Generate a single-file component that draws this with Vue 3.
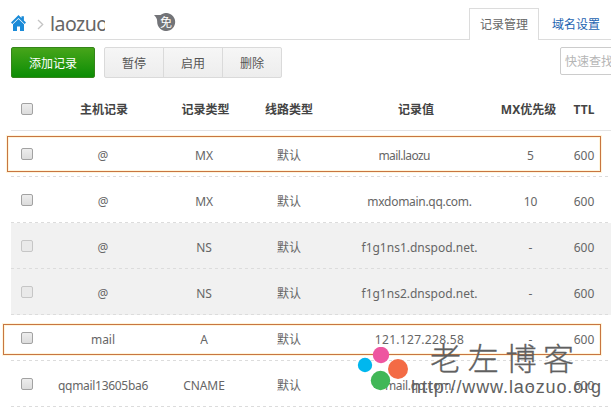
<script setup>
const rows = [
  { host: '@', type: 'MX', value: 'mail.laozuo', mx: '5', clip: true },
  { host: '@', type: 'MX', value: 'mxdomain.qq.com.', mx: '10', fit: 'tight' },
  { host: '@', type: 'NS', value: 'f1g1ns1.dnspod.net.', mx: '-', locked: true },
  { host: '@', type: 'NS', value: 'f1g1ns2.dnspod.net.', mx: '-', locked: true },
  { host: 'mail', type: 'A', value: '121.127.228.58', mx: '-', fit: 'loose' },
  { host: 'qqmail13605ba6', type: 'CNAME', value: 'mail.qq.com.', mx: '-', fit: 'tight' },
]
</script>

<template>
  <div class="page">
    <header class="top">
      <svg class="home" width="16" height="16" viewBox="0 0 16 16">
        <path d="M7.500 0 0 7.500 1.300 9 7.500 2.900 13.700 9 15 7.500 12.900 5.400V1.200h-2.400v1.800z" fill="#1b8bd8" />
        <path d="M7.500 3.900 2 9.200V16H6v-4.500h3V16h4V9.200z" fill="#1b8bd8" />
      </svg>
      <svg class="chevron" width="7" height="11" viewBox="0 0 7 11">
        <path d="M1 1l4.700 4.500L1 10" fill="none" stroke="#c4c4c4" stroke-width="1.300" />
      </svg>
      <h1 class="domain"><span>laozuo</span></h1>
      <div class="badge">
        <svg width="22" height="19" viewBox="0 0 22 19">
          <path d="M0 2h6.500a9 9 0 1 1-3.300 6.500C3.200 5.500 2 4 0 2z" fill="#737478" />
        </svg>
        <span>免</span>
      </div>
      <nav class="tabs">
        <a class="tab active">记录管理</a>
        <a class="tab">域名设置</a>
      </nav>
    </header>

    <div class="tools">
      <button class="add">添加记录</button>
      <div class="group">
        <button>暂停</button>
        <button>启用</button>
        <button>删除</button>
      </div>
      <div class="search">快速查找</div>
    </div>

    <div class="table">
      <div class="row head">
        <i class="check"></i>
        <span class="host">主机记录</span>
        <span class="type">记录类型</span>
        <span>线路类型</span>
        <span class="value">记录值</span>
        <span class="mx">MX优先级</span>
        <span>TTL</span>
      </div>
      <div v-for="(r, i) in rows" :key="i" class="row" :class="[r.fit, { locked: r.locked }]">
        <i class="check"></i>
        <span class="host">{{ r.host }}</span>
        <span class="type">{{ r.type }}</span>
        <span>默认</span>
        <span class="value" :class="{ clip: r.clip }"><b>{{ r.value }}</b></span>
        <span>{{ r.mx }}</span>
        <span>600</span>
      </div>
    </div>

    <div class="mark first"></div>
    <div class="mark second"></div>

    <div class="stamp">
      <svg class="dots" width="52" height="46" viewBox="0 0 52 46">
        <circle cx="8" cy="18" r="7.200" fill="#00b7ee" />
        <circle cx="24" cy="8" r="8.200" fill="#ee56a0" />
        <circle cx="41" cy="22" r="10" fill="#f36b45" />
        <circle cx="23.500" cy="33.500" r="9.700" fill="#41b757" />
      </svg>
      <div class="stamp-name">老左博客</div>
      <div class="stamp-url">http://www.laozuo.org</div>
    </div>
  </div>
</template>

<style>
body {
  background: #fff;
  overflow: hidden;
}
</style>

<style scoped>
.page {
  position: relative;
  width: 611px;
  height: 409px;
  overflow: hidden;
  box-sizing: border-box;
  padding-left: 11px;
  font: 12px "Noto Sans", "Noto Sans CJK SC", sans-serif;
  color: #666;
}
.top {
  display: flex;
  height: 40px;
  box-sizing: border-box;
  border-bottom: 1px solid #dcdcdc;
}
.home {
  margin-top: 15px;
}
.chevron {
  margin: 19px 0 0 10px;
}
.domain {
  width: 55px;
  margin: 9px 0 0 6px;
  font-size: 19.500px;
  font-weight: 400;
  letter-spacing: -0.500px;
  line-height: 30px;
  overflow: hidden;
  white-space: nowrap;
}
.badge {
  position: relative;
  width: 22px;
  height: 19px;
  margin: 13px 0 0 49px;
}
.badge span {
  position: absolute;
  left: 6px;
  top: 1px;
  font-size: 12px;
  line-height: 18px;
  color: #fff;
}
.badge svg {
  display: block;
}
.tabs {
  display: flex;
  margin: 8px 0 -1px auto;
}
.tab {
  box-sizing: border-box;
  width: 72px;
  padding-left: 13px;
  line-height: 33px;
  color: #1c63b0;
  white-space: nowrap;
}
.tab.active {
  width: 70px;
  padding-left: 10px;
  border: 1px solid #dcdcdc;
  border-bottom: 0;
  background: #fff;
  color: #666;
  line-height: 31px;
}
.tools {
  display: flex;
  height: 50px;
  padding-top: 7px;
  box-sizing: border-box;
}
button {
  box-sizing: border-box;
  padding: 0;
  font: inherit;
}
.add {
  flex: none;
  width: 84px;
  height: 31px;
  border: 1px solid #348519;
  border-radius: 2px;
  background: linear-gradient(#47a51a, #0c8d05);
  color: #fff;
}
.group {
  display: flex;
  flex: none;
  width: 178px;
  height: 31px;
  box-sizing: border-box;
  margin-left: 9px;
  border: 1px solid #dadada;
  border-radius: 2px;
  background: linear-gradient(#f6f6f6, #ededed);
}
.group button {
  flex: 1;
  border: 0;
  background: none;
  color: #555;
}
.group button + button {
  border-left: 1px solid #dadada;
}
.search {
  width: 70px;
  height: 28px;
  box-sizing: border-box;
  margin-left: 278px;
  flex-shrink: 0;
  padding-left: 4px;
  border: 1px solid #ccc;
  border-radius: 2px;
  line-height: 27px;
  color: #b5b5b5;
  white-space: nowrap;
}
.row {
  display: grid;
  grid-template-columns: 32px 120px 82px 88px 173px 49px 58px;
  align-items: center;
  height: 46px;
  width: 602px;
  box-sizing: border-box;
  padding-top: 4px;
  border-bottom: 1px dashed transparent;
  background: repeating-linear-gradient(90deg, #dcdcdc 0 3px, transparent 3px 6px) left bottom / 100% 1px no-repeat border-box;
}
.row span {
  display: flex;
  justify-content: center;
  white-space: nowrap;
  line-height: 18px;
}
.row b {
  font-weight: 400;
}
.tight .value,
.tight .host {
  letter-spacing: -0.300px;
}
.tight .type {
  letter-spacing: -0.100px;
}
.loose .value {
  letter-spacing: 0.300px;
}
.row.locked {
  background-color: #f1f1f1;
}
.row.head {
  height: 41px;
  padding-top: 0;
  border-bottom: 1px solid #e4e4e4;
  background: none;
  color: #444;
  font-weight: 700;
}
.row.head .host {
  padding-left: 2px;
}
.row.head .type {
  padding-left: 3px;
}
.row.head .value {
  padding-right: 7px;
}
.row.head .mx {
  margin: 0 -6px 0 -10px;
}
.clip b {
  width: 51px;
  margin-right: 31px;
  overflow: hidden;
  letter-spacing: -0.600px;
}
.check {
  box-sizing: border-box;
  width: 12px;
  height: 12px;
  margin: -3px 0 0 10px;
  border: 1px solid #a2a2a2;
  border-radius: 2px;
  background: linear-gradient(#ededed, #dcdcdc);
}
.head .check {
  margin-top: -2px;
}
.locked .check {
  border-color: #c6c6c6;
  background: #e9e9e9;
}
.mark {
  position: absolute;
  box-sizing: border-box;
  border: 1px solid #c87541;
  box-shadow: 0 0 0 1px #fff5dc, inset 0 0 0 1px #fff5dc;
}
.first {
  left: 7px;
  top: 136px;
  width: 594px;
  height: 36px;
}
.second {
  left: 3px;
  top: 324px;
  width: 598px;
  height: 31px;
}
.stamp {
  position: absolute;
  left: 357px;
  top: 347px;
  color: #606060;
}
.dots {
  display: block;
}
.stamp-name {
  position: absolute;
  left: 73px;
  top: -10px;
  font: 300 31px/40px "Noto Sans CJK SC", sans-serif;
  letter-spacing: 6.700px;
  white-space: nowrap;
  -webkit-text-stroke: 0.350px #606060;
}
.stamp-url {
  position: absolute;
  left: 54px;
  top: 29px;
  font: 18px/22px "Liberation Sans", sans-serif;
  letter-spacing: 0.900px;
  white-space: nowrap;
}
</style>
